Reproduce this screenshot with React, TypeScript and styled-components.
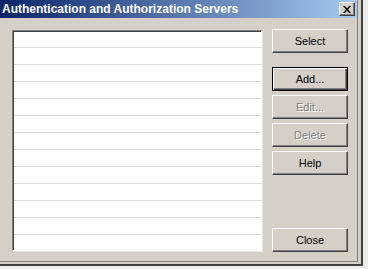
import React from "react";
import styled, { createGlobalStyle, css } from "styled-components";

const GlobalStyle = createGlobalStyle`
  html, body {
    margin: 0;
    padding: 0;
    background: #ececec;
  }
  body {
    font-family: "Liberation Sans", Arial, sans-serif;
  }
`;

const Window = styled.div`
  width: 358px;
  height: 262px;
  background: #d4d0c8;
  border-right: 2px solid #404040;
  border-bottom: 2px solid #404040;
  padding: 0 3px 2px 0;
`;

const Inner = styled.div`
  height: 100%;
  box-sizing: border-box;
  display: flex;
  flex-direction: column;
  border-right: 1px solid #808080;
  border-bottom: 1px solid #808080;
`;

const TitleBar = styled.div`
  height: 18px;
  display: flex;
  align-items: center;
  justify-content: space-between;
  padding: 0 2px;
  background: linear-gradient(to right, #0a246a, #a6caf0);
`;

const Title = styled.span`
  color: #fff;
  font-weight: bold;
  font-size: 12px;
`;

const CloseBox = styled.div`
  width: 16px;
  height: 14px;
  box-sizing: border-box;
  background: #d4d0c8;
  border-top: 1px solid #fff;
  border-left: 1px solid #fff;
  border-right: 1px solid #404040;
  border-bottom: 1px solid #404040;
  box-shadow: inset -1px -1px #808080;
  display: flex;
  align-items: center;
  justify-content: center;
`;

const Content = styled.div`
  flex: 1;
  display: flex;
  padding: 12px 0 0 12px;
`;

const ListBox = styled.div`
  width: 250px;
  height: 221px;
  box-sizing: border-box;
  background: #fff;
  border-top: 1px solid #808080;
  border-left: 1px solid #808080;
  border-right: 1px solid #fff;
  border-bottom: 1px solid #fff;
  box-shadow: inset 1px 1px #404040, 1px 1px #e8e6e0;
  overflow: hidden;
`;

const Row = styled.div`
  height: 17px;
  box-sizing: border-box;
  border-bottom: 1px solid #dcdcdc;
  margin-left: 1px;
`;

const ButtonColumn = styled.div`
  width: 76px;
  height: 223px;
  margin: -1px 0 0 10px;
  display: flex;
  flex-direction: column;
  gap: 4px;
`;

const Button = styled.div<{ $default?: boolean; $disabled?: boolean; $gapAfter?: number }>`
  height: 24px;
  box-sizing: border-box;
  display: flex;
  align-items: center;
  justify-content: center;
  font-size: 11px;
  color: #000;
  background: #d4d0c8;
  border-top: 1px solid #fff;
  border-left: 1px solid #fff;
  border-right: 1px solid #404040;
  border-bottom: 1px solid #404040;
  box-shadow: inset -1px -1px #808080;
  margin-bottom: ${(p) => p.$gapAfter ?? 0}px;
  ${(p) =>
    p.$default &&
    css`
      border: 1px solid #000;
      box-shadow: inset 1px 1px #fff, inset -1px -1px #404040, inset -2px -2px #808080;
    `}
  ${(p) =>
    p.$disabled &&
    css`
      color: #808080;
      text-shadow: 1px 1px #fff;
    `}
`;

const Spacer = styled.div`
  flex: 1;
`;

export default function App() {
  const rows = Array.from({ length: 13 });
  return (
    <>
      <GlobalStyle />
      <Window>
        <Inner>
          <TitleBar>
            <Title>Authentication and Authorization Servers</Title>
            <CloseBox>
              <svg width="8" height="7" viewBox="0 0 8 7">
                <path d="M0 0h2l2 2.5L6 0h2L5 3.5 8 7H6L4 4.5 2 7H0l3-3.5z" fill="#000" />
              </svg>
            </CloseBox>
          </TitleBar>
          <Content>
            <ListBox>
              {rows.map((_, i) => (
                <Row key={i} />
              ))}
            </ListBox>
            <ButtonColumn>
              <Button $gapAfter={10}>Select</Button>
              <Button $default>Add...</Button>
              <Button $disabled>Edit...</Button>
              <Button $disabled>Delete</Button>
              <Button>Help</Button>
              <Spacer />
              <Button>Close</Button>
            </ButtonColumn>
          </Content>
        </Inner>
      </Window>
    </>
  );
}
